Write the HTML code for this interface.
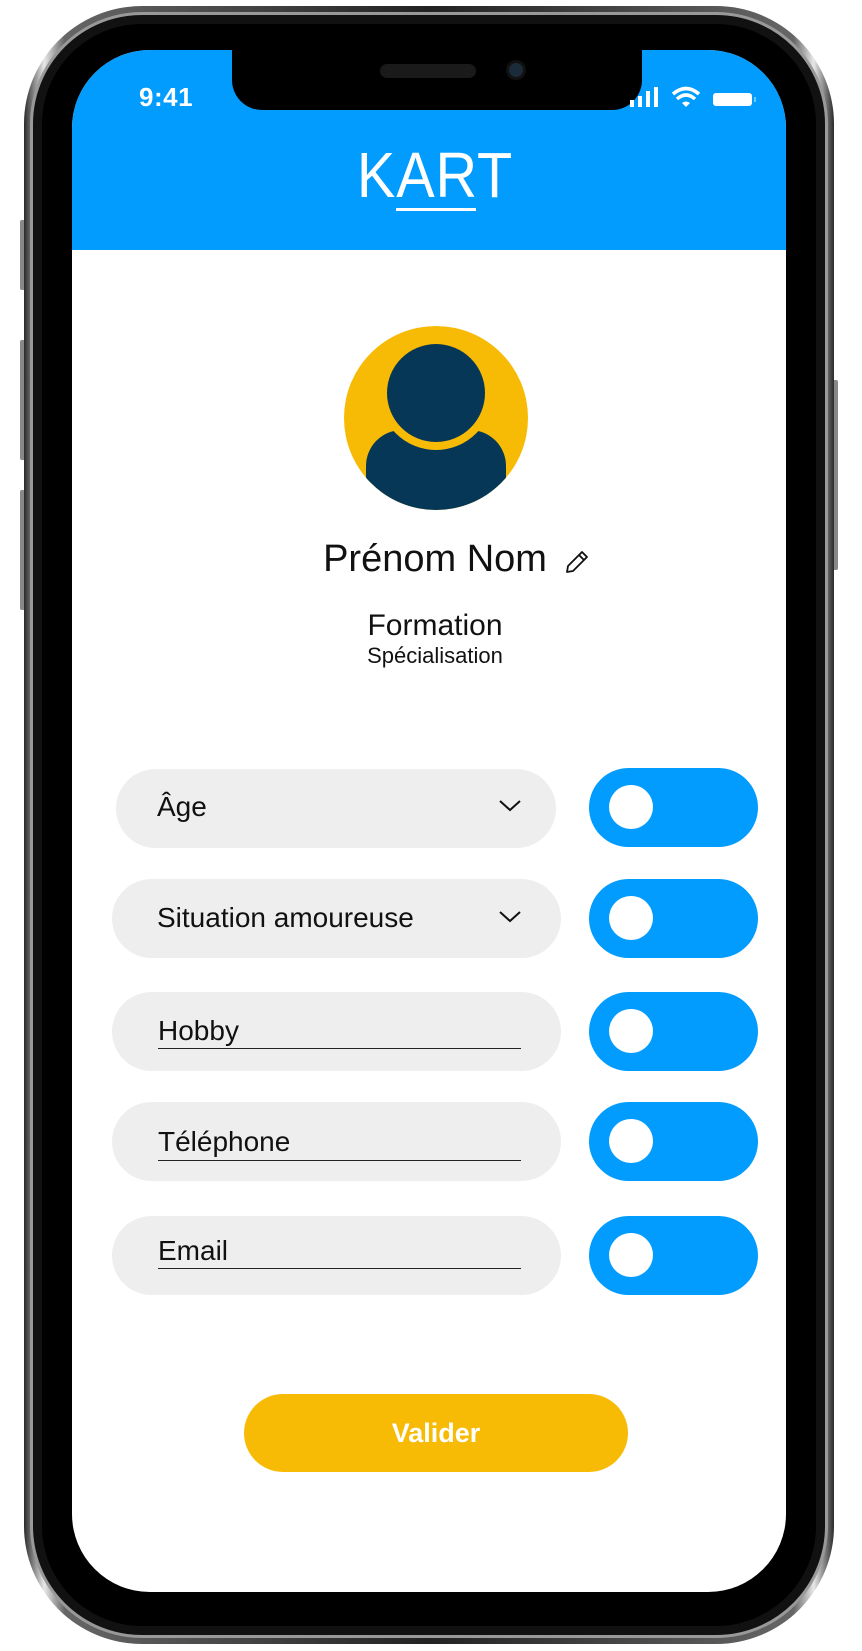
<!DOCTYPE html>
<html><head><meta charset="utf-8"><style>
*{margin:0;padding:0;box-sizing:border-box}
html,body{width:862px;height:1651px;background:#fff;overflow:hidden;font-family:"Liberation Sans",sans-serif}
.abs{position:absolute}
.rim{left:24px;top:6px;width:810px;height:1638px;border-radius:118px;background:linear-gradient(90deg,#2a2a2a,#e8e8e8 2.5%,#666 5%,#222 50%,#666 95%,#e8e8e8 97.5%,#2a2a2a)}
.rim2{left:30px;top:12px;width:798px;height:1626px;border-radius:112px;background:#111;border:3px solid #999}
.bez{left:42px;top:24px;width:774px;height:1602px;border-radius:100px;background:#000}
.scr{left:72px;top:50px;width:714px;height:1542px;border-radius:78px;background:#fff;overflow:hidden}
.hdr{left:0;top:0;width:714px;height:200px;background:#019cfe}
.notch{left:160px;top:0;width:410px;height:60px;background:#000;border-radius:0 0 30px 30px}
.field{background:#eeeeee;border-radius:40px;height:79px}
.tog{left:589px;width:169px;height:79px;background:#019cfe;border-radius:40px}
.knob{position:absolute;left:20px;top:17px;width:44px;height:44px;border-radius:50%;background:#fff}
.lbl{position:absolute;font-size:28px;color:#111}
.ul{position:absolute;left:158px;width:363px;height:1px;background:#222}
</style></head><body>
<div class="abs" style="left:20px;top:220px;width:5px;height:70px;background:#888;border-radius:2px"></div>
<div class="abs" style="left:20px;top:340px;width:5px;height:120px;background:#888;border-radius:2px"></div>
<div class="abs" style="left:20px;top:490px;width:5px;height:120px;background:#888;border-radius:2px"></div>
<div class="abs" style="left:833px;top:380px;width:5px;height:190px;background:#888;border-radius:2px"></div>
<div class="abs rim"></div>
<div class="abs rim2"></div>
<div class="abs bez"></div>
<div class="abs scr">
 <div class="abs hdr"></div>
 <div class="abs notch"></div>
 <div class="abs" style="left:308px;top:14px;width:96px;height:14px;border-radius:7px;background:#1a1a1a"></div>
 <div class="abs" style="left:434px;top:10px;width:20px;height:20px;border-radius:50%;background:#1b2b3a;border:3px solid #111"></div>
</div>
<div class="abs" style="left:139px;top:82px;color:#fff;font-size:26px;font-weight:bold;letter-spacing:.5px">9:41</div>
<svg class="abs" style="left:628px;top:86px" width="130" height="24" viewBox="0 0 130 24">
 <rect x="2" y="14" width="4" height="7" fill="#fff"/><rect x="10" y="10" width="4" height="11" fill="#fff"/><rect x="18" y="5" width="4" height="16" fill="#fff"/><rect x="26" y="1" width="4" height="20" fill="#fff"/>
 <path d="M45 8 Q58 -3 71 8" stroke="#fff" stroke-width="3.5" fill="none"/><path d="M49 13 Q58 5 67 13" stroke="#fff" stroke-width="3.5" fill="none"/><path d="M54 17 L58 21 L62 17 Q58 14 54 17Z" fill="#fff"/>
 <rect x="85" y="7" width="39" height="13" rx="3" fill="#fff"/><rect x="126" y="11" width="2" height="5" fill="#6cf"/>
</svg>
<div class="abs" style="left:235px;top:140px;width:400px;text-align:center;color:#fff;font-size:64px;font-weight:300;letter-spacing:1px;line-height:70px;transform:scaleX(.9)">KART</div>
<div class="abs" style="left:396px;top:208px;width:80px;height:3px;background:#fff"></div>

<div class="abs" style="left:344px;top:326px;width:184px;height:184px;border-radius:50%;background:#f7bb06;overflow:hidden">
 <div class="abs" style="left:22px;top:104px;width:140px;height:100px;border-radius:36px 36px 0 0;background:#063756"></div>
 <div class="abs" style="left:35px;top:10px;width:114px;height:114px;border-radius:50%;background:#f7bb06"></div>
 <div class="abs" style="left:43px;top:18px;width:98px;height:98px;border-radius:50%;background:#063756"></div>
</div>
<div class="abs" style="left:290px;top:536px;width:290px;text-align:center;font-size:38px;color:#111;line-height:46px">Prénom Nom</div>
<svg class="abs" style="left:564px;top:549px" width="26" height="26" viewBox="0 0 26 26"><path d="M3 23 L4 17 L18 3 L23 8 L9 22 Z M15 6 L20 11" stroke="#111" stroke-width="1.8" fill="none" stroke-linejoin="round"/></svg>
<div class="abs" style="left:300px;top:609px;width:270px;text-align:center;font-size:30px;color:#111;line-height:34px">Formation</div>
<div class="abs" style="left:300px;top:643px;width:270px;text-align:center;font-size:22px;color:#111;line-height:26px">Spécialisation</div>

<div class="abs field" style="left:116px;top:769px;width:440px"></div>
<div class="lbl" style="left:157px;top:791px">Âge</div>
<svg class="abs" style="left:498px;top:798px" width="24" height="16"><path d="M2 3 L12 12 L22 3" stroke="#111" stroke-width="2" fill="none"/></svg>
<div class="abs tog" style="top:768px"><div class="knob"></div></div>

<div class="abs field" style="left:112px;top:879px;width:449px"></div>
<div class="lbl" style="left:157px;top:902px">Situation amoureuse</div>
<svg class="abs" style="left:498px;top:909px" width="24" height="16"><path d="M2 3 L12 12 L22 3" stroke="#111" stroke-width="2" fill="none"/></svg>
<div class="abs tog" style="top:879px"><div class="knob"></div></div>

<div class="abs field" style="left:112px;top:992px;width:449px"></div>
<div class="lbl" style="left:158px;top:1015px">Hobby</div>
<div class="ul" style="top:1048px"></div>
<div class="abs tog" style="top:992px"><div class="knob"></div></div>

<div class="abs field" style="left:112px;top:1102px;width:449px"></div>
<div class="lbl" style="left:158px;top:1126px">Téléphone</div>
<div class="ul" style="top:1160px"></div>
<div class="abs tog" style="top:1102px"><div class="knob"></div></div>

<div class="abs field" style="left:112px;top:1216px;width:449px"></div>
<div class="lbl" style="left:158px;top:1235px">Email</div>
<div class="ul" style="top:1268px"></div>
<div class="abs tog" style="top:1216px"><div class="knob"></div></div>

<div class="abs" style="left:244px;top:1394px;width:384px;height:78px;border-radius:40px;background:#f7bb06;color:#fff;font-weight:bold;font-size:27px;text-align:center;line-height:78px">Valider</div>
</body></html>
